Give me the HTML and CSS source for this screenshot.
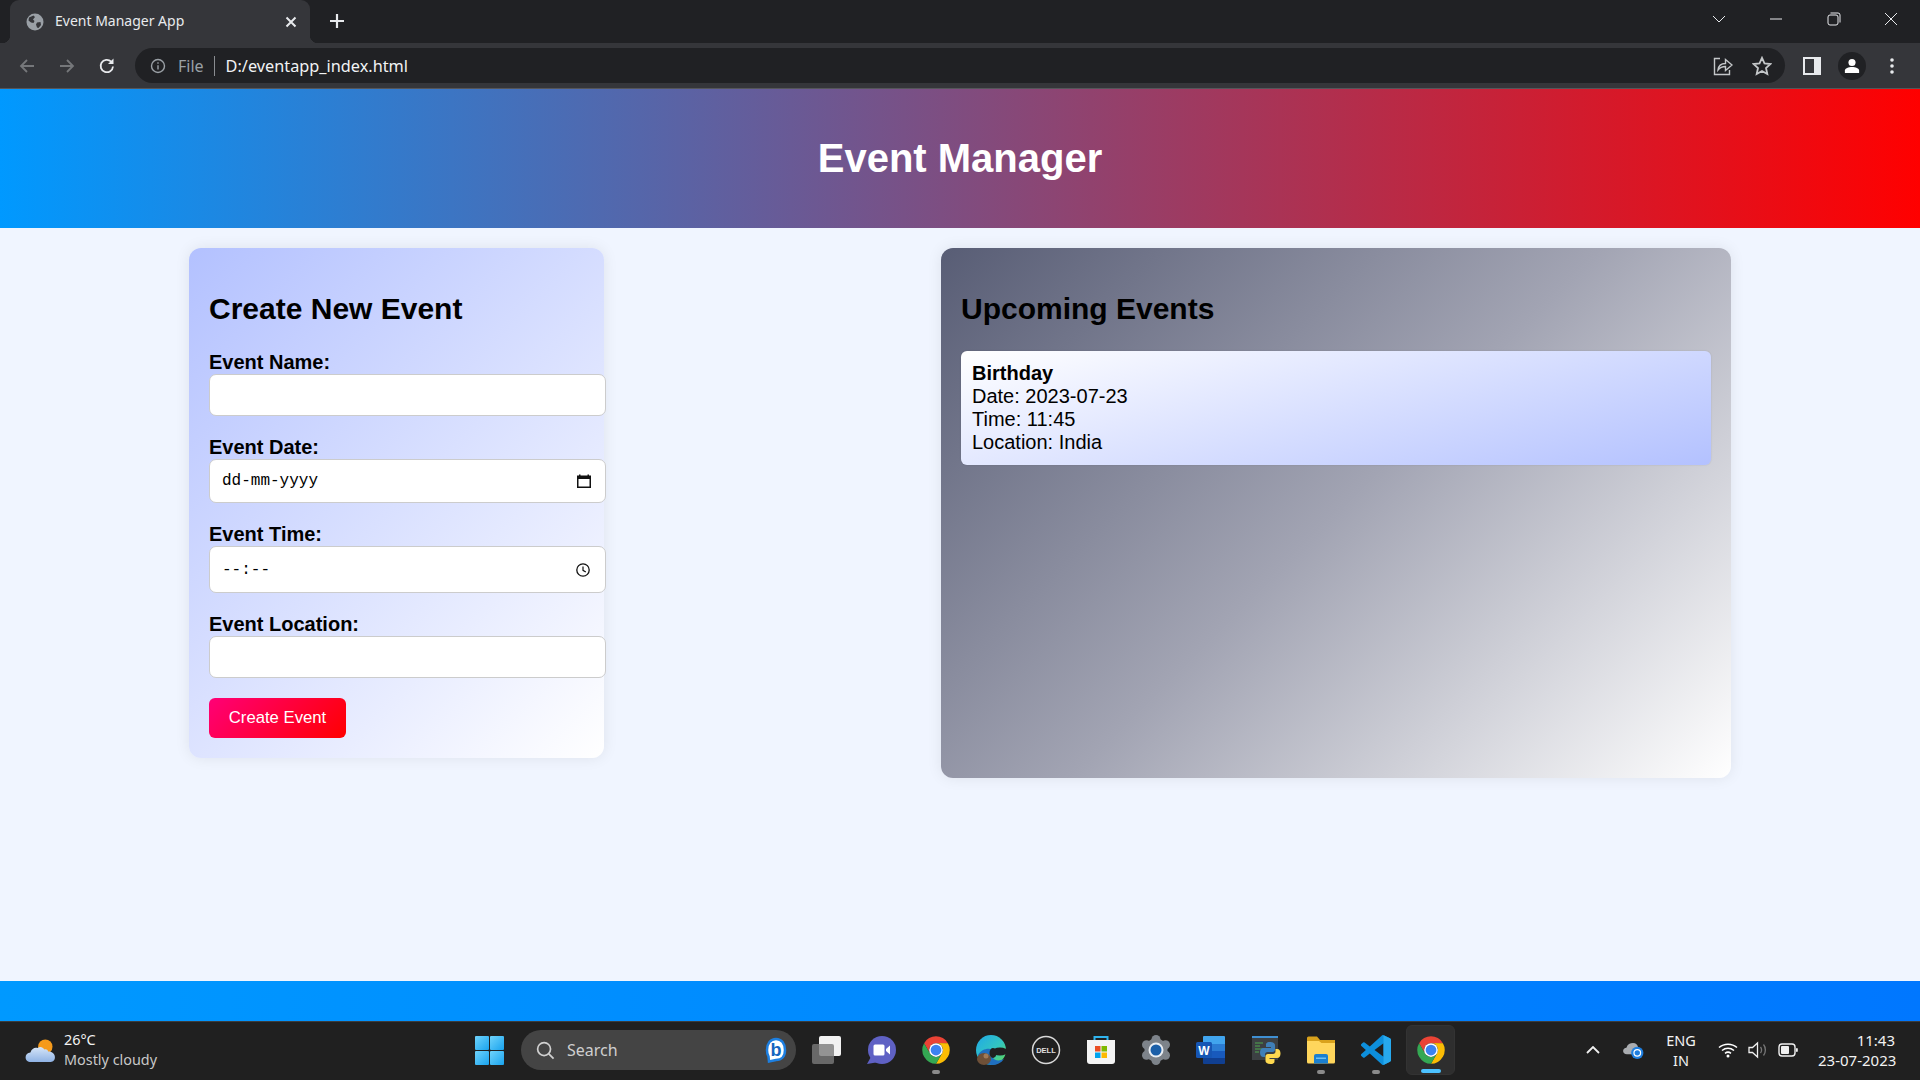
FILE: index.html
```html
<!DOCTYPE html>
<html>
<head>
  <title>Event Manager App</title>
  <link rel="stylesheet" href="styles.css">
</head>
<body>
  <svg class="defs" width="0" height="0">
    <defs>
      <symbol id="chrome-logo" viewBox="0 0 48 48">
        <path fill="#ea4335" d="M4.95 13A22 22 0 0 1 43.05 13H24A11 11 0 0 0 14.47 29.5Z"/>
        <path fill="#fbbc04" transform="rotate(120 24 24)" d="M4.95 13A22 22 0 0 1 43.05 13H24A11 11 0 0 0 14.47 29.5Z"/>
        <path fill="#34a853" transform="rotate(240 24 24)" d="M4.95 13A22 22 0 0 1 43.05 13H24A11 11 0 0 0 14.47 29.5Z"/>
        <circle cx="24" cy="24" r="11" fill="#fff"/>
        <circle cx="24" cy="24" r="8.6" fill="#3b82f0"/>
      </symbol>
      <linearGradient id="edge-top" x1="0" y1="0" x2="1" y2="1">
        <stop offset="0" stop-color="#1fa8e8"/>
        <stop offset="0.55" stop-color="#33c6c0"/>
        <stop offset="1" stop-color="#62d94f"/>
      </linearGradient>
      <linearGradient id="start-tile" x1="0" y1="0" x2="1" y2="1">
        <stop offset="0" stop-color="#6fd3fb"/>
        <stop offset="1" stop-color="#19a3ee"/>
      </linearGradient>
      <linearGradient id="cloud-fill" x1="0" y1="0" x2="0" y2="1">
        <stop offset="0" stop-color="#d6e6f8"/>
        <stop offset="1" stop-color="#8fb2e4"/>
      </linearGradient>
    </defs>
  </svg>

  <div class="tab-strip">
    <div class="tab">
      <svg class="tab-favicon" viewBox="0 0 18 18">
        <circle cx="9" cy="9" r="8.5" fill="#9aa0a6"/>
        <path fill="#35363a" d="M3 4.5 7.5 2.5 9 4 7 6.5 8.5 8 7.5 10 5 9.5 2.5 7.5ZM11 9.5 14.5 9 15 12 12.5 15 11 14.5 10 11.5Z"/>
      </svg>
      <span class="tab-title">Event Manager App</span>
      <svg class="tab-close" viewBox="0 0 12 12"><path d="M1.5 1.5 10.5 10.5M10.5 1.5 1.5 10.5"/></svg>
    </div>
    <svg class="new-tab" viewBox="0 0 16 16"><path d="M8 1V15M1 8H15"/></svg>
    <div class="window-controls">
      <div class="win-btn"><svg viewBox="0 0 14 8"><path d="M1 1 7 7 13 1"/></svg></div>
      <div class="win-btn"><svg viewBox="0 0 14 14"><path d="M1 7H13"/></svg></div>
      <div class="win-btn"><svg viewBox="0 0 14 14"><rect x="1" y="3" width="10" height="10" rx="2"/><path d="M3.5 1H11a2 2 0 0 1 2 2v7.5"/></svg></div>
      <div class="win-btn"><svg viewBox="0 0 14 14"><path d="M1 1 13 13M13 1 1 13"/></svg></div>
    </div>
  </div>

  <div class="toolbar">
    <div class="nav-btn muted"><svg viewBox="0 0 18 18"><path d="M16 9H3M9 3 3 9 9 15"/></svg></div>
    <div class="nav-btn muted"><svg viewBox="0 0 18 18"><path d="M2 9H15M9 3 15 9 9 15"/></svg></div>
    <div class="nav-btn"><svg viewBox="0 0 18 18"><path d="M15 9.500A6.200 6.200 0 1 1 13.200 4.600"/><path class="solid" d="M15.500 1.500V7H10Z"/></svg></div>
    <div class="omnibox">
      <svg class="info-icon" viewBox="0 0 16 16">
        <circle cx="8" cy="8" r="6.500"/>
        <path d="M8 7.200V11.500M8 4.300V5.800"/>
      </svg>
      <span class="scheme">File</span>
      <span class="omni-divider"></span>
      <span class="url">D:/eventapp_index.html</span>
      <svg class="omni-icon share" viewBox="0 0 20 20">
        <path d="M7 2.500H1.500V18.500H16.500V14"/>
        <path d="M5 14C5.500 9.500 8.500 7.500 12.500 7.500V3.500L19 9 12.500 14.500V10.500C9.500 10.500 7 11.500 5 14Z"/>
      </svg>
      <svg class="omni-icon star" viewBox="0 0 20 20"><path d="M10 1.800 12.500 7.300 18.500 8 14 12 15.300 18 10 15 4.700 18 6 12 1.500 8 7.500 7.300Z"/></svg>
    </div>
    <div class="tool-btn"><svg class="side-panel" viewBox="0 0 18 18"><rect width="18" height="18" fill="#e8eaed"/><rect x="2" y="2" width="9" height="14" fill="#35363a"/></svg></div>
    <div class="tool-btn"><div class="avatar"><svg viewBox="0 0 18 18"><circle cx="9" cy="5" r="4" fill="#fff"/><path fill="#fff" d="M1 17V14C1 11.500 5 10 9 10S17 11.500 17 14V17Z"/></svg></div></div>
    <div class="tool-btn"><svg class="kebab" viewBox="0 0 4 16"><circle cx="2" cy="2" r="1.800"/><circle cx="2" cy="8" r="1.800"/><circle cx="2" cy="14" r="1.800"/></svg></div>
  </div>

  <header class="app-header">
    <h1>Event Manager</h1>
  </header>

  <main class="app-main">
    <section class="card create-card">
      <h2>Create New Event</h2>
      <form>
        <div class="form-group">
          <label for="eventName">Event Name:</label>
          <input type="text" id="eventName" class="field">
        </div>
        <div class="form-group">
          <label>Event Date:</label>
          <div class="field field-date">
            <span>dd-mm-yyyy</span>
            <svg class="picker-icon" viewBox="0 0 14 14">
              <path fill="#111" d="M2 0.500h1.500v1h7v-1H12v1h2v12.500H0V1.500h2ZM1.500 5V12.500h11V5Z"/>
            </svg>
          </div>
        </div>
        <div class="form-group">
          <label>Event Time:</label>
          <div class="field field-time">
            <span>--:--</span>
            <svg class="picker-icon picker-clock" viewBox="0 0 14 14">
              <circle cx="7" cy="7" r="6.200" fill="none" stroke="#111" stroke-width="1.300"/>
              <path fill="none" stroke="#111" stroke-width="1.200" d="M7 3.500V7.300L9.800 9"/>
            </svg>
          </div>
        </div>
        <div class="form-group">
          <label for="eventLocation">Event Location:</label>
          <input type="text" id="eventLocation" class="field">
        </div>
        <button type="button" class="create-btn">Create Event</button>
      </form>
    </section>

    <section class="card events-card">
      <h2>Upcoming Events</h2>
      <div class="event-item">
        <strong>Birthday</strong><br>
        Date: 2023-07-23<br>
        Time: 11:45<br>
        Location: India
      </div>
    </section>
  </main>

  <footer class="app-footer"></footer>

  <div class="taskbar">
    <div class="weather">
      <svg class="weather-icon" viewBox="0 0 32 26">
        <circle cx="21" cy="9" r="7.500" fill="#f59a1b"/>
        <path fill="url(#cloud-fill)" d="M6 25C2.500 25 0.500 22.800 0.500 20S2.500 15.200 5.500 15C7 11 10 9.500 13 10.500 15 8.500 18.500 9 20 12 21.500 11 23.500 12 24 14 28 13.800 31 16.500 31 20S28.500 25 25.500 25Z"/>
      </svg>
      <div class="weather-text">
        <div class="temp">26°C</div>
        <div class="condition">Mostly cloudy</div>
      </div>
    </div>

    <svg class="start-icon" viewBox="0 0 29 29">
      <rect width="14" height="14" rx="1" fill="url(#start-tile)"/>
      <rect x="15" width="14" height="14" rx="1" fill="url(#start-tile)"/>
      <rect y="15" width="14" height="14" rx="1" fill="url(#start-tile)"/>
      <rect x="15" y="15" width="14" height="14" rx="1" fill="url(#start-tile)"/>
    </svg>

    <div class="search-pill">
      <svg class="search-icon" viewBox="0 0 20 20"><circle cx="8.500" cy="8.500" r="6.800"/><path d="M13.500 13.500 18.500 18.500"/></svg>
      <span class="search-text">Search</span>
      <svg class="bing-icon" viewBox="0 0 22 26">
        <path fill="#fff" stroke="#1d7fe0" stroke-width="2.500" d="M11 2C16.500 2 20 6.500 20 13C20 19.500 16.500 23 11 23L4 24.500L3.500 19.500C2.500 18 2 15.500 2 13C2 6.500 5.500 2 11 2Z"/>
        <text x="11" y="19" text-anchor="middle" class="bing-b">b</text>
      </svg>
    </div>

    <div class="task-apps">
      <div class="task-app">
        <svg viewBox="0 0 30 30">
          <rect x="8" y="1" width="22" height="20" rx="2" fill="#f2f2f2"/>
          <rect x="1" y="9" width="22" height="20" rx="2" fill="#7a7a7a" opacity="0.800"/>
        </svg>
      </div>
      <div class="task-app">
        <svg viewBox="0 0 30 30">
          <circle cx="16" cy="15" r="14" fill="#5f61c4"/>
          <path fill="#5f61c4" d="M6 20 1 29 13 27Z"/>
          <rect x="7.500" y="9.500" width="11" height="11" rx="1.500" fill="#fff"/>
          <path fill="#fff" d="M20 14 24 10.500V19.500L20 16Z"/>
        </svg>
      </div>
      <div class="task-app running">
        <svg viewBox="0 0 30 30"><use href="#chrome-logo"/></svg>
      </div>
      <div class="task-app">
        <svg viewBox="0 0 30 30">
          <circle cx="15" cy="15" r="15" fill="url(#edge-top)"/>
          <path fill="#1f6fc0" d="M2 20C4 27 10 30 16 30 21 30 25 28 28 24 24 26 19 26 17 23 15 20 17 17 20 16.500 15 12 6 13 2 20Z"/>
          <ellipse cx="17" cy="18" rx="3.500" ry="5" fill="#202020"/>
          <ellipse cx="24" cy="16.500" rx="8" ry="4" fill="#202020"/>
          <ellipse cx="8" cy="24" rx="7" ry="6" fill="#6e5038"/>
          <circle cx="10" cy="21" r="2.500" fill="#a07a58"/>
        </svg>
      </div>
      <div class="task-app">
        <svg viewBox="0 0 30 30">
          <circle cx="15" cy="15" r="13.500" fill="none" stroke="#d8d8d8" stroke-width="1.500"/>
          <text x="15" y="18" text-anchor="middle" class="dell-text">DELL</text>
        </svg>
      </div>
      <div class="task-app">
        <svg viewBox="0 0 30 30">
          <path fill="none" stroke="#2fb4ee" stroke-width="2" d="M8.500 6.500V2H21.500V6.500"/>
          <path fill="#f4f4f4" d="M1 5H29V26A3 3 0 0 1 26 29H4A3 3 0 0 1 1 26Z"/>
          <rect x="9" y="11" width="5.500" height="5.500" fill="#ea4e24"/>
          <rect x="15.500" y="11" width="5.500" height="5.500" fill="#7eb900"/>
          <rect x="9" y="17.500" width="5.500" height="5.500" fill="#00a3ee"/>
          <rect x="15.500" y="17.500" width="5.500" height="5.500" fill="#fdb900"/>
        </svg>
      </div>
      <div class="task-app">
        <svg viewBox="0 0 30 30">
          <g fill="#7d838a">
            <circle cx="15" cy="15" r="11.500"/>
            <circle cx="15" cy="4.500" r="4.500"/>
            <circle cx="15" cy="25.500" r="4.500"/>
            <circle cx="5.500" cy="9.800" r="4.500"/>
            <circle cx="24.500" cy="9.800" r="4.500"/>
            <circle cx="5.500" cy="20.200" r="4.500"/>
            <circle cx="24.500" cy="20.200" r="4.500"/>
          </g>
          <circle cx="15" cy="15" r="7.500" fill="#e9edf2"/>
          <circle cx="15" cy="15" r="5.500" fill="#1b5fa8"/>
        </svg>
      </div>
      <div class="task-app">
        <svg viewBox="0 0 30 30">
          <path fill="#41a5ee" d="M8 1H28A1 1 0 0 1 29 2V9H7V2A1 1 0 0 1 8 1Z"/>
          <rect x="7" y="9" width="22" height="7" fill="#2b7cd3"/>
          <rect x="7" y="16" width="22" height="7" fill="#185abd"/>
          <path fill="#103f91" d="M7 23H29V28A1 1 0 0 1 28 29H8A1 1 0 0 1 7 28Z"/>
          <rect x="0" y="7" width="16" height="16" rx="1.500" fill="#1656b4"/>
          <text x="8" y="20" text-anchor="middle" class="word-w">W</text>
        </svg>
      </div>
      <div class="task-app">
        <svg viewBox="0 0 30 30">
          <rect x="1" y="1" width="26" height="24" fill="#3c4043"/>
          <rect x="1" y="1" width="26" height="2" fill="#3f8fd2"/>
          <path stroke="#4fa84f" stroke-width="1" d="M4 8H12M4 11H9M4 14H13M4 17H8"/>
          <path fill="#3f7fb8" d="M19 7C15 7 15 9 15 10V12H20V13H12.500C10 13 9 15 9 17.500S10 22 12.500 22H14V19.500C14 18 15 17 16.500 17H21.500C23 17 24 16 24 14.500V10C24 8.500 22.500 7 19 7Z"/>
          <path fill="#ffd94f" d="M19.500 29C23.500 29 23.500 27 23.500 26V24H18.500V23H26C28.500 23 29.500 21 29.500 18.500S28.500 14 26 14H24.500V16.500C24.500 18 23.500 19 22 19H17C15.500 19 14.500 20 14.500 21.500V26C14.500 27.500 16 29 19.500 29Z"/>
        </svg>
      </div>
      <div class="task-app running">
        <svg viewBox="0 0 30 30">
          <path fill="#d9a21c" d="M1 3A1.500 1.500 0 0 1 2.500 1.500H11L14 5H29V12H1Z"/>
          <path fill="#ffd65c" d="M1 6H13L15.500 8H29V27A1.500 1.500 0 0 1 27.500 28.500H2.500A1.500 1.500 0 0 1 1 27Z"/>
          <path fill="#1b7fcf" d="M8 21A2 2 0 0 1 10 19H20A2 2 0 0 1 22 21V28.500H8Z"/>
          <rect x="10" y="22.500" width="10" height="1.500" fill="#6fc1f2"/>
        </svg>
      </div>
      <div class="task-app running">
        <svg viewBox="0 0 24 24">
          <path fill="#0d8fdc" d="M23.150 2.587 18.210.21a1.494 1.494 0 0 0-1.705.29l-9.460 8.630-4.120-3.128a.999.999 0 0 0-1.276.057L.327 7.261A1 1 0 0 0 .326 8.740L3.899 12 .326 15.260a1 1 0 0 0 .001 1.479L1.650 17.940a.999.999 0 0 0 1.276.057l4.120-3.128 9.460 8.630a1.492 1.492 0 0 0 1.704.29l4.942-2.377A1.500 1.500 0 0 0 24 20.060V3.939a1.500 1.500 0 0 0-.85-1.352zm-5.146 14.861L10.826 12l7.178-5.448v10.896z"/>
          <path fill="#27a9ee" d="M18 .1 23.150 2.587A1.500 1.500 0 0 1 24 3.939V20.060A1.500 1.500 0 0 1 23.150 21.412L18 23.900Z"/>
        </svg>
      </div>
      <div class="task-app active">
        <svg viewBox="0 0 30 30"><use href="#chrome-logo"/></svg>
      </div>
    </div>

    <div class="tray">
      <div class="tray-item w40"><svg class="tray-chevron" viewBox="0 0 14 8"><path d="M1 7 7 1 13 7"/></svg></div>
      <div class="tray-item w40">
        <svg class="tray-cloud" viewBox="0 0 22 18">
          <path fill="#a9acb0" d="M4 13C1.500 13 0 11.500 0 9.500S1.500 6 3.500 6C4.500 2.500 7.500 1 10.500 1 13.500 1 15.500 3 16 6L16 13Z"/>
          <circle cx="15" cy="11.500" r="6.500" fill="#1f7fe0"/>
          <circle cx="15" cy="11.500" r="3.500" fill="none" stroke="#fff" stroke-width="1.300"/>
        </svg>
      </div>
      <div class="tray-lang"><div>ENG</div><div>IN</div></div>
      <div class="tray-item w30">
        <svg class="tray-wifi" viewBox="0 0 20 16">
          <path d="M1 5.500C6 1 14 1 19 5.500M4 8.500C7.500 5.500 12.500 5.500 16 8.500M7 11.300C8.800 9.900 11.200 9.900 13 11.300"/>
          <circle cx="10" cy="14" r="1.500" fill="#fff" stroke="none"/>
        </svg>
      </div>
      <div class="tray-item w30">
        <svg class="tray-vol" viewBox="0 0 20 18">
          <path stroke="#f0f0f0" d="M1 6.500H4.500L9.500 2V16L4.500 11.500H1Z"/>
          <path stroke="#777" d="M12.500 6C13.800 7.800 13.800 10.200 12.500 12M15.500 3.500C18 6.500 18 11.500 15.500 14.500"/>
        </svg>
      </div>
      <div class="tray-item w30">
        <svg class="tray-batt" viewBox="0 0 20 14">
          <rect x="1" y="1" width="16" height="12" rx="3" fill="none" stroke="#f0f0f0" stroke-width="1.400"/>
          <rect x="3" y="3" width="8" height="8" rx="1" fill="#f0f0f0"/>
          <rect x="18" y="5" width="1.800" height="4" rx="0.900" fill="#f0f0f0"/>
        </svg>
      </div>
      <div class="clock"><div>11:43</div><div>23-07-2023</div></div>
    </div>
  </div>
</body>
</html>
```

FILE: styles.css
```css
html, body {
  margin: 0;
  height: 100%;
}
body {
  display: flex;
  flex-direction: column;
  height: 100vh;
  overflow: hidden;
  font-family: "Liberation Sans", Arial, sans-serif;
  background-color: #f0f5ff;
  color: #000;
}
.defs {
  position: absolute;
}

/* browser chrome */
.tab-strip {
  flex: 0 0 43px;
  display: flex;
  align-items: stretch;
  background: #202124;
}
.tab {
  position: relative;
  width: 300px;
  margin-left: 10px;
  display: flex;
  align-items: center;
  background: #35363a;
  border-radius: 9px 9px 0 0;
  box-sizing: border-box;
  padding: 0 13px 0 16px;
}
.tab::before, .tab::after {
  content: "";
  position: absolute;
  bottom: 0;
  width: 8px;
  height: 8px;
}
.tab::before {
  left: -8px;
  background: radial-gradient(circle at 0 0, #202124 8px, #35363a 8.500px);
}
.tab::after {
  right: -8px;
  background: radial-gradient(circle at 100% 0, #202124 8px, #35363a 8.500px);
}
.tab-favicon {
  width: 18px;
  height: 18px;
}
.tab-title {
  flex: 1;
  margin: 0 0 2px 11px;
  font-family: "Noto Sans", sans-serif;
  font-size: 14px;
  color: #e8eaed;
}
.tab-close {
  width: 12px;
  height: 12px;
  fill: none;
  stroke: #e8eaed;
  stroke-width: 2;
}
.new-tab {
  width: 16px;
  height: 16px;
  margin: 13px 0 0 19px;
  fill: none;
  stroke: #e8eaed;
  stroke-width: 2.200;
}
.window-controls {
  margin-left: auto;
  display: flex;
}
.win-btn {
  width: 57.500px;
  display: flex;
  align-items: center;
  justify-content: center;
}
.win-btn svg {
  width: 14px;
  height: 14px;
  fill: none;
  stroke: #e8eaed;
  stroke-width: 1;
  margin-bottom: 6px;
}

.toolbar {
  flex: 0 0 46px;
  display: flex;
  align-items: center;
  background: #35363a;
  padding: 0 8px 0 7px;
  box-sizing: border-box;
  border-bottom: 1px solid #55565a;
}
.nav-btn {
  width: 40px;
  display: flex;
  justify-content: center;
}
.nav-btn svg {
  width: 18px;
  height: 18px;
  fill: none;
  stroke: #e8eaed;
  stroke-width: 1.800;
}
.nav-btn.muted svg {
  stroke: #75777a;
}
.nav-btn .solid {
  fill: #e8eaed;
  stroke: none;
}
.omnibox {
  flex: 1;
  height: 35px;
  margin: 0 7px 0 8px;
  border-radius: 18px;
  background: #202124;
  display: flex;
  align-items: center;
  padding-left: 15px;
}
.info-icon {
  width: 16px;
  height: 16px;
  fill: none;
  stroke: #9aa0a6;
  stroke-width: 1.400;
}
.scheme {
  margin-left: 12px;
  font-family: "Noto Sans", sans-serif;
  font-size: 16px;
  color: #9aa0a6;
}
.omni-divider {
  width: 1px;
  height: 20px;
  margin: 0 11px 0 10px;
  background: #8a8d91;
}
.url {
  flex: 1;
  font-family: "Noto Sans", sans-serif;
  font-size: 16.300px;
  color: #f1f3f4;
}
.omni-icon {
  width: 20px;
  height: 20px;
  fill: none;
  stroke: #c4c7c9;
  stroke-width: 1.400;
}
.share {
  margin-right: 19px;
}
.star {
  margin-right: 13px;
  stroke-width: 1.800;
}
.tool-btn {
  width: 40px;
  display: flex;
  justify-content: center;
  align-items: center;
}
.side-panel {
  width: 18px;
  height: 18px;
}
.avatar {
  width: 28px;
  height: 28px;
  border-radius: 50%;
  background: #202124;
  display: flex;
  align-items: center;
  justify-content: center;
}
.avatar svg {
  width: 16px;
  height: 16px;
}
.kebab {
  width: 4px;
  height: 16px;
  fill: #e8eaed;
}

/* the page itself */
.app-header {
  flex: 0 0 139px;
  display: flex;
  align-items: center;
  justify-content: center;
  background: linear-gradient(to right, #0099ff, #ff0000);
}
.app-header h1 {
  margin: 0;
  font-size: 40px;
  color: white;
}
.app-main {
  flex: 1;
  display: flex;
  justify-content: space-between;
  align-items: flex-start;
  padding: 20px 189px 0;
}
.card {
  box-sizing: border-box;
  padding: 20px;
  border-radius: 12px;
  box-shadow: 0 0 15px rgba(0,0,0,0.08);
}
.card h2 {
  margin: 24px 0 25px;
  font-size: 30px;
  line-height: 34px;
}
.create-card {
  width: 415px;
  height: 510px;
  background: linear-gradient(135deg, #b3c1ff, #ffffff);
}
.events-card {
  width: 790px;
  height: 530px;
  background: linear-gradient(135deg, #585d75, #a2a4b3 50%, #ffffff);
}
.form-group {
  margin-bottom: 20px;
}
.form-group label {
  display: block;
  height: 23px;
  font-size: 20px;
  line-height: 23px;
  font-weight: bold;
}
.field {
  display: flex;
  align-items: center;
  justify-content: space-between;
  box-sizing: border-box;
  width: calc(100% + 22px);
  height: 42px;
  padding: 0 11px 0 12px;
  border: 1px solid #ccc;
  border-radius: 7px;
  background: #fff;
  font-family: "Liberation Mono", monospace;
  font-size: 16px;
}
.field-date {
  height: 44px;
}
.field-time {
  height: 47px;
}
.picker-icon {
  width: 14px;
  height: 14px;
  margin-right: 3px;
}
.picker-clock {
  margin-right: 4px;
}
.create-btn {
  display: block;
  width: 137px;
  height: 40px;
  padding: 0;
  border: none;
  border-radius: 6px;
  background: linear-gradient(135deg, #ff0077, #ff0000);
  color: white;
  font-family: "Liberation Sans", Arial, sans-serif;
  font-size: 16.700px;
}
.event-item {
  margin-top: 25px;
  padding: 11px 11px 11px;
  border-radius: 6px;
  background: linear-gradient(165deg, #ffffff, #b3c1ff);
  box-shadow: 0 0 2px rgba(0,0,0,0.12);
  font-size: 20px;
  line-height: 23px;
}
.app-footer {
  flex: 0 0 40px;
  background: linear-gradient(to right, #0099ff, #0077ff);
}

/* windows taskbar */
.taskbar {
  flex: 0 0 59px;
  box-sizing: border-box;
  display: flex;
  align-items: center;
  padding-bottom: 2px;
  background: #202020;
  border-top: 1px solid #3c3c3c;
  font-family: "Noto Sans", sans-serif;
  color: #f2f2f2;
}
.weather {
  flex: 0 0 475px;
  box-sizing: border-box;
  padding-left: 25px;
  display: flex;
  align-items: center;
}
.weather-icon {
  width: 31px;
  height: 25px;
}
.weather-text {
  margin-left: 8px;
  font-size: 14.400px;
  line-height: 20px;
}
.condition {
  color: #c8c8c8;
}
.start-icon {
  flex: 0 0 29px;
  height: 29px;
}
.search-pill {
  width: 275px;
  height: 40px;
  margin-left: 17px;
  box-sizing: border-box;
  display: flex;
  align-items: center;
  padding: 0 9px 0 15px;
  background: #444;
  border-radius: 20px;
}
.search-icon {
  width: 19px;
  height: 19px;
  fill: none;
  stroke: #d0d0d0;
  stroke-width: 1.800;
}
.search-text {
  flex: 1;
  margin-left: 12px;
  font-size: 16px;
  color: #cfcfcf;
}
.bing-icon {
  width: 22px;
  height: 26px;
}
.bing-b {
  font-family: "Liberation Sans", sans-serif;
  font-size: 18px;
  font-weight: bold;
  fill: #1565c0;
}
.task-apps {
  display: flex;
  align-items: center;
  margin-left: 2px;
}
.task-app {
  position: relative;
  width: 55px;
  height: 56px;
  display: flex;
  align-items: center;
  justify-content: center;
}
.task-app svg {
  width: 30px;
  height: 30px;
}
.task-app.running::after, .task-app.active::after {
  content: "";
  position: absolute;
  left: 50%;
  bottom: 4px;
  width: 8px;
  height: 4px;
  margin-left: -4px;
  border-radius: 2px;
  background: #8a8a8a;
}
.task-app.active {
  width: 49px;
  height: 50px;
  margin-left: 3px;
  border-radius: 6px;
  background: #2e2e2e;
  border: 1px solid #333;
  box-sizing: border-box;
}
.task-app.active::after {
  bottom: 1px;
  width: 20px;
  margin-left: -10px;
  background: #4cc2ff;
}
.dell-text {
  font-family: "Liberation Sans", sans-serif;
  font-size: 7.500px;
  font-weight: bold;
  fill: #e0e0e0;
}
.word-w {
  font-family: "Liberation Sans", sans-serif;
  font-size: 12px;
  font-weight: bold;
  fill: #fff;
}
.tray {
  margin-left: auto;
  padding-right: 25px;
  display: flex;
  align-items: center;
}
.tray-item {
  display: flex;
  justify-content: center;
  align-items: center;
}
.w40 {
  width: 40px;
}
.w30 {
  width: 30px;
}
.tray-chevron {
  width: 14px;
  height: 8px;
  fill: none;
  stroke: #f0f0f0;
  stroke-width: 1.800;
}
.tray-cloud {
  width: 21px;
  height: 17px;
}
.tray-lang {
  width: 42px;
  margin: 0 11px 0 7px;
  text-align: center;
  font-size: 14.500px;
  line-height: 20px;
}
.tray-wifi {
  width: 20px;
  height: 16px;
  fill: none;
  stroke: #fff;
  stroke-width: 1.500;
}
.tray-vol {
  width: 20px;
  height: 18px;
  fill: none;
  stroke-width: 1.300;
}
.tray-batt {
  width: 20px;
  height: 14px;
}
.clock {
  width: 77px;
  margin-left: 15px;
  text-align: right;
  white-space: nowrap;
  font-size: 15px;
  line-height: 20px;
}
```
